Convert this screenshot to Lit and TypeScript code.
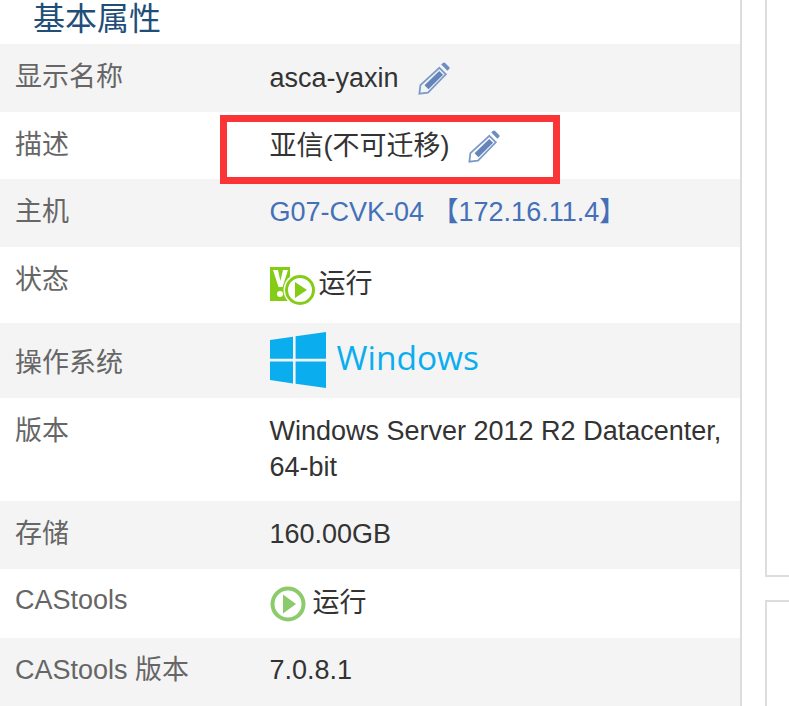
import { LitElement, html, css, svg } from "lit";
import { customElement } from "lit/decorators.js";

const pencil = html`<svg class="pencil" viewBox="0 0 32 33" width="32" height="33">
  <path fill="#6c8ebf" d="M23.200 2.600l1.700-1.700a1.600 1.600 0 0 1 2.200 0l4 4a1.600 1.600 0 0 1 0 2.200l-1.700 1.700z"/>
  <path fill="none" stroke="#7d9ac8" stroke-width="1.800" d="M21.400 5.800l6.400 6.500L10 30.600l-8.600 1 1-8.400z"/>
  <path fill="#6484ba" d="M21.200 9l3.900 3.800-14.600 14.400-4-3.900z"/>
</svg>`;

const play = svg`<circle cx="18" cy="18" r="15.500" fill="none" stroke-width="4"/>`;

@customElement("app-root")
export class AppRoot extends LitElement {
  static styles = css`
    :host {
      display: block;
      height: 706px;
      overflow: hidden;
      background: #fff;
      font-family: "Liberation Sans", "Noto Sans CJK SC", sans-serif;
      font-size: 27px;
      color: #333;
    }
    .page { display: flex; height: 706px; position: relative; overflow: hidden; }
    .left { width: 740px; flex: none; border-right: 2px solid #ddd; }
    .heading {
      height: 44px;
      padding-left: 33px;
      font-size: 32px;
      line-height: 38px;
      color: #1f4e79;
    }
    .row { display: grid; grid-template-columns: 269.500px 1fr; }
    .row.alt { background: #f4f4f4; }
    .label { padding-left: 15px; color: #666; line-height: 36px; }
    .value { line-height: 36px; display: flex; align-items: flex-start; flex-wrap: wrap; }
    .h68 { height: 68px; }
    .h67 { height: 67px; }
    .h69 { height: 69px; }
    .h76 { height: 76px; }
    .h75 { height: 75px; }
    .h103 { height: 103px; }
    .pt14 > * { padding-top: 14px; }
    .pt15 > * { padding-top: 15px; }
    .row .nudge { padding-top: 16px; }
    .row .label.raise { padding-top: 13px; }
    .pencil { margin: 2px 0 0 19px; flex: none; }
    a { color: #4470b8; text-decoration: none; }
    .status-text { margin-top: 4px; }
    .os-label { padding-top: 22px; }
    .os-value { padding-top: 9px; }
    .win-logo { flex: none; }
    .win-text {
      font-family: "Open Sans", sans-serif;
      font-size: 33.500px;
      line-height: 50px;
      color: #0aaeef;
      margin-left: 11px;
    }
    .tool-icon { margin-top: 3px; }
    .tool-text { margin: 2px 0 0 7px; }
    .right {
      margin-left: 23px;
      flex: 1;
      display: flex;
      flex-direction: column;
      gap: 23px;
    }
    .box1 { height: 575px; flex: none; border: 2px solid #ddd; border-top: 0; border-right: 0; }
    .box2 { flex: 1; border: 2px solid #ddd; border-bottom: 0; border-right: 0; }
    .mark {
      position: absolute;
      left: 220px;
      top: 115px;
      width: 340px;
      height: 69px;
      box-sizing: border-box;
      border: 7px solid #fb3438;
      pointer-events: none;
    }
  `;

  render() {
    return html`<div class="page">
      <div class="left">
        <div class="heading">基本属性</div>
        <div class="row alt h68 pt15">
          <div class="label">显示名称</div>
          <div class="value nudge">asca-yaxin${pencil}</div>
        </div>
        <div class="row h67 pt15">
          <div class="label">描述</div>
          <div class="value nudge">亚信(不可迁移)${pencil}</div>
        </div>
        <div class="row alt h68 pt15">
          <div class="label">主机</div>
          <div class="value"><a>G07-CVK-04 【172.16.11.4】</a></div>
        </div>
        <div class="row h76 pt15">
          <div class="label">状态</div>
          <div class="value">
            <svg width="49" height="44" viewBox="0 0 49 44">
              <path fill="#84cc16" d="M0 5h20v34H0z"/>
              <path fill="#fff" d="M3 8h5l2.400 11L13 8h5l-5.500 17H8.500z"/>
              <circle cx="10" cy="32" r="3" fill="#fff"/>
              <circle cx="30" cy="28" r="16.500" fill="#fff"/>
              <circle cx="30" cy="28" r="13.500" fill="#fff" stroke="#84cc16" stroke-width="3"/>
              <path fill="#84cc16" d="M25 20l12 8-12 8z"/>
            </svg>
            <span class="status-text">运行</span>
          </div>
        </div>
        <div class="row alt h75">
          <div class="label os-label">操作系统</div>
          <div class="value os-value">
            <svg class="win-logo" width="56" height="56" viewBox="0 0 56 56">
              <path fill="#0aaeef" d="M0 8l23-3.200v22H0z M25.600 4.300L56 0v26.800H25.600z M0 29.400h23v22L0 48z M25.600 29.400H56V56l-30.400-4.300z"/>
            </svg>
            <span class="win-text">Windows</span>
          </div>
        </div>
        <div class="row h103 pt15">
          <div class="label">版本</div>
          <div class="value">Windows Server 2012 R2 Datacenter, 64-bit</div>
        </div>
        <div class="row alt h68 pt15">
          <div class="label">存储</div>
          <div class="value">160.00GB</div>
        </div>
        <div class="row h69 pt14">
          <div class="label raise">CAStools</div>
          <div class="value">
            <svg class="tool-icon" width="36" height="36" viewBox="0 0 36 36">
              <g stroke="#8acb6b">${play}</g>
              <path fill="#8acb6b" d="M13 8.500l13 9.500-13 9.500z"/>
            </svg>
            <span class="tool-text">运行</span>
          </div>
        </div>
        <div class="row alt h68 pt14">
          <div class="label">CAStools 版本</div>
          <div class="value">7.0.8.1</div>
        </div>
      </div>
      <div class="right">
        <div class="box1"></div>
        <div class="box2"></div>
      </div>
      <div class="mark"></div>
    </div>`;
  }
}
